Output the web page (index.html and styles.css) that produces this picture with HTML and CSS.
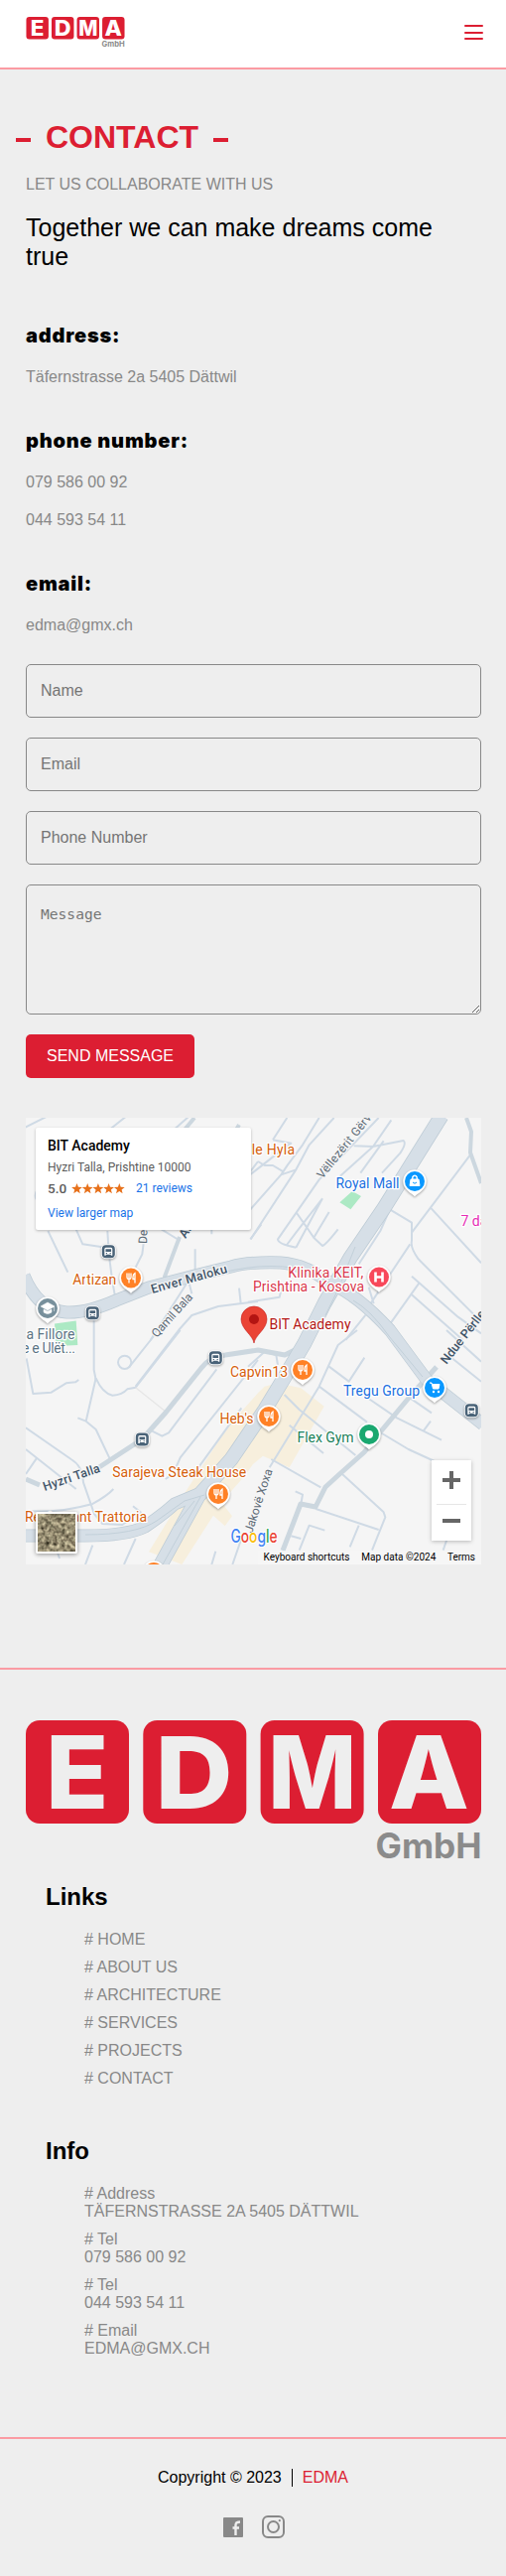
FILE: index.html
```html
<!DOCTYPE html>
<html lang="en">
<head>
<meta charset="utf-8">
<title>EDMA GmbH - Contact</title>
<link rel="stylesheet" href="styles.css">
</head>
<body>
<svg class="defs" aria-hidden="true">
  <symbol id="logo" viewBox="0 0 459 139">
    <g fill="#dc1e32">
      <rect width="104" height="104" rx="14"/><rect x="118.300" width="104" height="104" rx="14"/>
      <rect x="236.600" width="104" height="104" rx="14"/><rect x="355" width="104" height="104" rx="14"/>
    </g>
    <g class="logo-letters">
      <text transform="translate(20 88.700) scale(1.030 1)">E</text>
      <text transform="translate(130.600 88.700) scale(1.070 1)">D</text>
      <text transform="translate(244.300 88.700) scale(.935 1)">M</text>
      <text transform="translate(366 88.700) scale(1.040 1)">A</text>
    </g>
    <text class="logo-sub" x="352.500" y="138.500" textLength="107" lengthAdjust="spacingAndGlyphs">GmbH</text>
  </symbol>
  <symbol id="pin" viewBox="-14 -14 28 34" overflow="visible">
    <path d="M0 15.500 C-2 12.500 -11.800 9 -11.800 0 A11.800 11.800 0 0 1 11.800 0 C11.800 9 2 12.500 0 15.500Z" fill="#fff" class="pin-shadow"/>
    <circle r="10" fill="currentColor"/>
  </symbol>
  <symbol id="food" viewBox="-14 -14 28 34" overflow="visible">
    <use href="#pin" x="-14" y="-14" width="28" height="34"/>
    <path d="M-4-5v4q0 2 2 2t2-2v-4M-2-5V5M4 5V-5q-2 1-2 4v2h2" fill="none" stroke="#fff" stroke-width="1.300"/>
  </symbol>
  <symbol id="bus" viewBox="-8 -8 16 16" overflow="visible">
    <rect x="-7.500" y="-7.500" width="15" height="15" rx="5" fill="#fff" class="pin-shadow"/>
    <rect x="-6.500" y="-6.500" width="13" height="13" rx="4" fill="#4a6378"/>
    <path d="M-4 4V-2.500q0-1.500 1.500-1.500h5Q4-4 4-2.500V4H2.500V3h-5v1z" fill="#fff"/>
    <path d="M-2.800-2.500h5.600V.3h-5.600zM-2.500 1.300h1.200v1h-1.200zM1.300 1.300h1.200v1H1.300z" fill="#4a6378"/>
  </symbol>
</svg>

<header class="header">
  <svg class="header-logo"><use href="#logo"/></svg>
  <button class="menu" aria-label="Menu"><span></span><span></span><span></span></button>
</header>

<main>
  <h1 class="title">CONTACT</h1>
  <section class="contact">
    <p class="kicker">LET US COLLABORATE WITH US</p>
    <h2 class="tagline">Together we can make dreams come true</h2>
    <h3>address:</h3>
    <p>Täfernstrasse 2a 5405 Dättwil</p>
    <h3>phone number:</h3>
    <p>079 586 00 92</p>
    <p>044 593 54 11</p>
    <h3>email:</h3>
    <p>edma@gmx.ch</p>
    <form class="form">
      <input type="text" placeholder="Name">
      <input type="email" placeholder="Email">
      <input type="tel" placeholder="Phone Number">
      <textarea placeholder="Message"></textarea>
      <button type="button">SEND MESSAGE</button>
    </form>
  </section>

  <div class="map">
    <svg class="map-canvas" viewBox="0 0 459 450">
      <rect width="459" height="450" fill="#f5f5f5"/>
      <g transform="translate(-26 214) scale(.33333)" fill="#f7efdd">
        <path d="M780 190L690 290 560 490 450 670 550 708 645 560 680 592 702 562 670 520 740 440 765 405 795 380 875 415 980 230 910 175 840 160 800 170z"/>
      </g>
      <g fill="#ace9c4"><path d="M29 207.500l21.700-3 1.600 24.500-21.700 1zM329 74l9 5-10.600 13.300-11-7z"/></g>

      <g fill="none" stroke="#cfdae5" stroke-width="6" stroke-linejoin="round">
        <g transform="translate(-26 -16) scale(.33333)">
          <path d="M70 80L150 40M330 85L380 45M525 85L570 45M230 385L250 430 320 440M145 390L205 515M325 390Q330 500 350 600M440 380L430 460 410 500M488 385L545 420M590 445V520M640 380V400M757 415L790 370M455 720L570 540 580 580M780 603L660 618 580 645 540 690 410 860"/>
          <path d="M723 563L728 608M284 655V810L290 840M110 270q-6 15 0 25M780 180L750 220"/>
        </g>
        <g transform="translate(224 -16) scale(.33333)">
          <path d="M118 48L75 115M75 115L130 125 90 155 0 225M215 48L165 130 120 190 100 220 0 333M260 48L185 130 145 205 8 415M30 180L50 192H75L108 212M100 220L145 205M395 48L215 235 90 415Q90 430 145 440M145 440L225 292M433 55L378 135 278 225M320 133L378 135 470 117Q480 125 460 155L405 215M410 118L340 215M225 292L145 395 115 435M145 333L185 390 200 412 225 435Q235 432 272 385M245 333L198 412M430 322L400 390 335 490M420 320L495 365V420Q490 440 515 475L705 665M672 160L495 395M552 320L705 487M490 430L370 610M495 527L635 650 705 700M517 548L430 670M495 583L650 720M365 560L380 610M355 645L295 720M0 605L95 590 102 560"/>
        </g>
        <g transform="translate(-26 214) scale(.33333)">
          <path d="M80 85L100 192 155 188 200 160 228 157 238 150M290 145Q310 190 340 197 370 195 385 178L410 173 545 0"/>
          <path d="M410 173L500 245" stroke="#e6e6e6" stroke-width="4"/>
          <circle cx="377" cy="97" r="20"/><path d="M390 112L465 18M235 265L260 275 290 300 335 395M260 275L290 145M78 295L215 390Q250 410 252 460L285 555 310 585 370 588 425 550 402 532M78 360L230 480M110 388L78 435M78 545Q170 555 280 525 325 500 343 480M460 305L490 320 510 310 655 118M780 90L545 385 530 420M730 235L600 415M500 450L515 440M280 650L258 708M410 630L375 708M170 660L180 690M652 668L640 708M730 630L703 708"/>
        </g>
        <g transform="translate(224 214) scale(.33333)">
          <path d="M0 110L50 65 85 75 90 105M330 0L272 45 215 170 65 415M245 110L305 155 352 83M215 170L360 278M110 195L155 240 325 378M125 287L228 372M70 390L220 475M365 207L450 265 585 332M490 205L555 250M530 305L552 275M405 312L485 360 590 408M285 435L410 550 415 565 375 665M205 540L395 603M335 590L308 655M143 487L165 497 160 525M232 605L185 590 155 665M130 622L160 630M600 0L705 95M605 75L705 155M602 630L590 665"/>
        </g>
      </g>

      <g fill="none" stroke="#ccd7df" stroke-width="5" stroke-linejoin="round">
        <path d="M0 364L14 370M74 352L117 324 141 297 177 252Q185 241 201 239L234 234 261 239 273 233"/>
        <path d="M414 251L387 281 357 317 341 337 314 361 302 372 292 392 277 389 259 436"/>
        <path d="M444 0L449 14 448 35 459 66M155 120L140 160 148 167M150 24L170 0M205 24L215 7" stroke-width="4"/>
      </g>

      <g fill="none" stroke-linejoin="round">
        <g stroke="#bdcbd5">
          <path d="M419-2L361 91 327 141 314 164 301 187 281 227 261 261 241 294 207 344 174 381 135 452" stroke-width="15"/>
          <path d="M-2 159Q12 194 41 196 61 197 91 184L124 171 174 158 207 150Q224 145 257 146 284 148 307 167 334 178 367 214L404 264 461 309" stroke-width="13"/>
          <path d="M-2 421H51Q100 422 120 412 138 400 150 389L174 379" stroke-width="13"/>
        </g>
        <g stroke="#d6dfe7">
          <path d="M419-2L361 91 327 141 314 164 301 187 281 227 261 261 241 294 207 344 174 381 135 452" stroke-width="13.500"/>
          <path d="M-2 159Q12 194 41 196 61 197 91 184L124 171 174 158 207 150Q224 145 257 146 284 148 307 167 334 178 367 214L404 264 461 309" stroke-width="11.500"/>
          <path d="M-2 421H51Q100 422 120 412 138 400 150 389L174 379" stroke-width="11.500"/>
        </g>
        <g stroke="#bdcbd5" stroke-width=".8">
          <path d="M332 130L318 165M198 156Q250 143 290 156L312 170M330 184Q348 194 366 220L400 261M60 420Q111 420 132 406L160 386 180 380M176 382L138 450M170 386L150 411M318 166L302 199"/>
        </g>
      </g>

      <g class="road-labels">
        <text transform="translate(127.500 177) rotate(-15.500)" textLength="79" class="strong">Enver Maloku</text>
        <text transform="translate(132 222) rotate(-48)" textLength="55">Qamil Bala</text>
        <text transform="translate(299 62) rotate(-51)" textLength="86">Vëllezërit Gërva</text>
        <text transform="translate(122 127) rotate(-88)">Deshm</text>
        <text transform="translate(161 122) rotate(-58)" class="strong">Art</text>
        <text transform="translate(19 376) rotate(-19)" textLength="60" class="strong">Hyzri Talla</text>
        <text transform="translate(228 419) rotate(-72)" textLength="67">Jakovë Xoxa</text>
        <text transform="translate(424 249) rotate(-52)" class="strong">Ndue Përlleshi</text>
      </g>

      <g class="places">
        <g fill="#d5600c">
          <text x="47.300" y="167.500" textLength="44">Artizan</text>
          <text x="211" y="37" textLength="60">Vale Hyla</text>
          <text x="206" y="261" textLength="58">Capvin13</text>
          <text x="195.500" y="308" textLength="34">Heb's</text>
          <text x="87.300" y="362" textLength="135">Sarajeva Steak House</text>
          <text x="-1" y="407" textLength="123">Restaurant Trattoria</text>
        </g>
        <g fill="#d9374c"><text x="264.300" y="161" textLength="76">Klinika KEIT,</text><text x="229" y="175" textLength="112">Prishtina - Kosova</text></g>
        <text x="245.500" y="213" textLength="82" fill="#b31412">BIT Academy</text>
        <g fill="#1a6fe0"><text x="312.500" y="71" textLength="64">Royal Mall</text><text x="320" y="279.500" textLength="77">Tregu Group</text></g>
        <text x="273.500" y="326.500" textLength="57" fill="#188058">Flex Gym</text>
        <text x="438.500" y="109" fill="#e52cb4">7 days</text>
        <g fill="#5a7383"><text x=".5" y="223" textLength="49">a Fillore</text><text x="-4" y="237" textLength="54">e e Ulët...</text></g>
      </g>

      <use href="#food" x="92" y="147.500" width="28" height="34" color="#ff8126"/>
      <use href="#food" x="265" y="240" width="28" height="34" color="#ff8126"/>
      <use href="#food" x="231" y="287" width="28" height="34" color="#ff8126"/>
      <use href="#food" x="180" y="365" width="28" height="34" color="#ff8126"/>
      <use href="#food" x="115" y="444" width="28" height="34" color="#ff8126"/>
      <use href="#pin" x="378" y="50" width="28" height="34" color="#0a98ff"/>
      <path d="M388 62h8l1 6.500h-10zM389.500 62v-1.500a2.500 2.500 0 0 1 5 0V62" fill="#fff" stroke="#fff"/>
      <path d="M390.500 60.500a1.500 1.500 0 0 1 3 0v1h-3z" fill="#0a98ff"/>
      <path d="M390 65q2 2.500 4 0" fill="none" stroke="#0a98ff"/>
      <use href="#pin" x="398" y="258" width="28" height="34" color="#0a98ff"/>
      <path d="M407 267h2l1.500 6h5.500l1-4.500h-7" fill="#fff" stroke="#fff"/><circle cx="411" cy="276" r="1.200" fill="#fff"/><circle cx="416" cy="276" r="1.200" fill="#fff"/>
      <use href="#pin" x="342" y="146.500" width="28" height="34" color="#f8485a"/>
      <path d="M352.500 155.500v10M359.500 155.500v10M352.500 160.500h7" stroke="#fff" stroke-width="2.600"/>
      <use href="#pin" x="332" y="305" width="28" height="34" color="#1ba870"/><circle cx="346" cy="319" r="4" fill="#fff"/>
      <use href="#pin" x="8" y="178" width="28" height="34" color="#78909c"/>
      <path d="M22 186l7 4-7 4-7-4zM18 193v3q4 3 8 0v-3l-4 2zM28.500 190v5" fill="#fff" stroke="#fff" stroke-width=".5"/>
      <use href="#bus" x="75.300" y="126.700" width="16" height="16"/><use href="#bus" x="59.300" y="188.700" width="16" height="16"/>
      <use href="#bus" x="183.300" y="233.700" width="16" height="16"/><use href="#bus" x="109.300" y="316" width="16" height="16"/>
      <use href="#bus" x="441.300" y="286.700" width="16" height="16"/>
      <path d="M230 227C229 219 217 213 217 203a13 13 0 0 1 26 0C243 213 231 219 230 227z" fill="#ea4335" stroke="#c5221f" stroke-width=".6"/>
      <circle cx="230" cy="203" r="5" fill="#b31412"/>

      <text class="google" x="206.500" y="427.500" textLength="47" lengthAdjust="spacingAndGlyphs"><tspan fill="#4285f4">G</tspan><tspan fill="#ea4335">o</tspan><tspan fill="#fbbc04">o</tspan><tspan fill="#4285f4">g</tspan><tspan fill="#34a853">l</tspan><tspan fill="#ea4335">e</tspan></text>
      <rect x="234" y="436" width="225" height="14" fill="#f5f5f5" opacity=".75"/>
      <g class="legal">
        <text x="239.500" y="446" textLength="87">Keyboard shortcuts</text><text x="338.300" y="446" textLength="75">Map data ©2024</text><text x="425" y="446" textLength="28">Terms</text>
      </g>
    </svg>
    <div class="place-card">
      <strong>BIT Academy</strong>
      <span class="place-address">Hyzri Talla, Prishtine 10000</span>
      <div class="rating"><b>5.0</b>
        <svg width="54" height="11" viewBox="0 0 54 11" fill="#e7711b"><defs><path id="star" d="M5.500 0l1.400 3.700 4 .2-3.100 2.500 1 3.900L5.500 8 2.200 10.300l1-3.900L.1 3.900l4-.2z"/></defs><use href="#star"/><use href="#star" x="10.700"/><use href="#star" x="21.400"/><use href="#star" x="32.100"/><use href="#star" x="42.800"/></svg>
        <a>21 reviews</a></div>
      <a>View larger map</a>
    </div>
    <svg class="satellite" viewBox="0 0 38 38">
      <filter id="terrain" x="0" y="0" width="100%" height="100%" color-interpolation-filters="sRGB"><feTurbulence type="fractalNoise" baseFrequency=".25" numOctaves="4" seed="8"/><feColorMatrix values=".7 .5 0 0 -.02 .7 .45 0 0 -.03 .6 .4 0 0 -.06 0 0 0 0 1"/></filter>
      <rect width="38" height="38" fill="#9c9078" filter="url(#terrain)"/>
    </svg>
    <div class="zoom"><span class="plus"></span><hr><span class="minus"></span></div>
  </div>
</main>

<footer class="footer">
  <svg class="footer-logo"><use href="#logo"/></svg>
  <section class="footer-block">
    <h4>Links</h4>
    <ul><li># HOME</li><li># ABOUT US</li><li># ARCHITECTURE</li><li># SERVICES</li><li># PROJECTS</li><li># CONTACT</li></ul>
  </section>
  <section class="footer-block info">
    <h4>Info</h4>
    <ul>
      <li># Address<br>TÄFERNSTRASSE 2A 5405 DÄTTWIL</li>
      <li># Tel<br>079 586 00 92</li>
      <li># Tel<br>044 593 54 11</li>
      <li># Email<br>EDMA@GMX.CH</li>
    </ul>
  </section>
</footer>
<div class="bottom">
  <p class="copyright"><span>Copyright © 2023</span><a>EDMA</a></p>
  <div class="social">
    <svg width="20" height="20" viewBox="0 0 20 20"><rect width="20" height="20" rx="1" fill="#888"/><path d="M12.500 18v-7.500M9.500 10.500H16M12.500 11V7.500Q12.500 4.500 17 4.500" fill="none" stroke="#eee" stroke-width="2.400"/></svg>
    <svg width="23" height="23" viewBox="0 0 23 23" fill="none" stroke="#888" stroke-width="2"><rect x="1" y="1" width="21" height="21" rx="5"/><circle cx="11.500" cy="11.500" r="5.500"/><circle cx="17.800" cy="5.200" r="1.100" fill="#888" stroke="none"/></svg>
  </div>
</div>
</body>
</html>
```
FILE: styles.css
```css
* { box-sizing: border-box; margin: 0; padding: 0; }
body { background: #eee; color: #000; font: 16px/18px "Liberation Sans", Arial, sans-serif; }
.defs { position: absolute; width: 0; height: 0; }
.logo-letters { font: 800 101px Inter, sans-serif; fill: currentColor; }
.logo-sub { font: 700 35px Inter, sans-serif; fill: #8b8b8b; }

.header { display: flex; justify-content: space-between; align-items: flex-start; height: 70px; padding: 17px 23px 0 26px; background: #fff; border-bottom: 2px solid #fb9ba3; }
.header-logo { width: 100px; height: 30px; color: #fff; }
.menu { display: flex; flex-direction: column; gap: 4.500px; width: 19px; margin-top: 8px; border: 0; background: none; }
.menu span { height: 2px; border-radius: 1px; background: #dc1e32; }

.title { display: flex; align-items: center; gap: 15px; height: 36px; margin: 50px 0 0 16px; color: #dc1e32; font-size: 32px; line-height: 36px; }
.title::before, .title::after { content: ""; width: 15px; height: 4px; margin-top: 6px; background: #dc1e32; }
.contact { padding: 21px 25px 0 26px; }
.contact p { color: #888; margin-bottom: 20px; }
.tagline { font-size: 25px; font-weight: 400; line-height: 29px; }
.contact h3 { margin: 54px 0 21px; font: 900 20px/23px Inter, sans-serif; letter-spacing: .8px; }
.contact p + h3 { margin-top: 44px; }

.form { display: flex; flex-direction: column; align-items: flex-start; gap: 20px; margin-top: 30px; }
.form input, .form textarea { width: 100%; border: 1px solid #888; border-radius: 5px; background: transparent; padding: 0 14px; }
.form input { height: 54px; font: 16px "Liberation Sans", Arial, sans-serif; }
.form textarea { height: 131px; padding-top: 20px; font: 14.600px "DejaVu Sans Mono", monospace; }
.form ::placeholder { color: #757575; }
.form button { width: 170px; height: 44px; border: 0; border-radius: 5px; background: #dc1e32; color: #fff; font: 16px "Liberation Sans", Arial, sans-serif; }

.map { position: relative; height: 450px; margin: 40px 25px 0 26px; overflow: hidden; font-family: Roboto, sans-serif; }
.map-canvas { display: block; width: 459px; height: 450px; }
.pin-shadow { filter: drop-shadow(0 1px 1px rgba(0, 0, 0, .35)); }
.places, .road-labels { paint-order: stroke; stroke: #fff; stroke-width: 2.500px; stroke-linejoin: round; font: 14px Roboto, sans-serif; }
.road-labels { font-size: 12px; fill: #5c6a76; stroke: #f5f5f5; }
.road-labels .strong { font-weight: 500; font-size: 12.500px; fill: #3f5468; }
.google { font: 500 18px Inter, sans-serif; paint-order: stroke; stroke: #fff; stroke-width: 2px; }
.legal { font: 10px Roboto, sans-serif; fill: #000; }
.place-card { position: absolute; left: 10px; top: 10px; display: flex; flex-direction: column; width: 217px; height: 103px; padding: 9px 12px; border-radius: 2px; background: #fff; box-shadow: 0 1px 3px rgba(0, 0, 0, .25); color: #5b5b5b; font-size: 12px; line-height: 18px; }
.place-card strong { color: #000; font-size: 14px; font-weight: 500; }
.place-card a { color: #1a73e8; }
.place-address { margin-top: 4px; }
.rating { display: flex; align-items: center; margin: 3px 0 7px; }
.rating b { width: 24px; font-size: 13.500px; font-weight: 500; }
.rating a { margin-left: 11px; }
.satellite { position: absolute; left: 10px; top: 397px; width: 42px; height: 42px; border: 2px solid #fff; border-radius: 2px; box-shadow: 0 1px 4px rgba(0, 0, 0, .4); }
.zoom { position: absolute; left: 409px; top: 345px; width: 40px; height: 81px; display: flex; flex-direction: column; align-items: center; justify-content: space-between; padding: 11px 0 18px; background: #fff; box-shadow: 0 1px 4px rgba(0, 0, 0, .25); }
.zoom hr { width: 30px; border: 0; border-top: 1px solid #e6e6e6; }
.plus { width: 18px; height: 18px; background: linear-gradient(#666, #666) center / 18px 4px no-repeat, linear-gradient(#666, #666) center / 4px 18px no-repeat; }
.minus { width: 18px; height: 4px; background: #666; }

.footer { height: 777px; margin-top: 104px; padding: 51px 25px 0 26px; border-top: 2px solid #fb9ba3; border-bottom: 2px solid #fb9ba3; }
.footer-logo { display: block; width: 459px; height: 139px; color: #eee; }
.footer-block { padding: 25px 0 0 20px; }
.footer-block h4 { font-size: 24px; line-height: 28px; }
.footer-block ul { padding: 20px 0 0 39px; list-style: none; color: #888; }
.footer-block li { margin-bottom: 10px; }
.footer-block.info { padding-top: 40px; }
.bottom { display: flex; flex-direction: column; align-items: center; height: 138px; padding-top: 30px; }
.copyright { display: flex; }
.copyright span { padding-right: 10px; border-right: 1px solid #000; }
.copyright a { padding-left: 10px; color: #dc1e32; }
.social { display: flex; align-items: center; gap: 19px; margin-top: 29px; padding-left: 2px; }
```
